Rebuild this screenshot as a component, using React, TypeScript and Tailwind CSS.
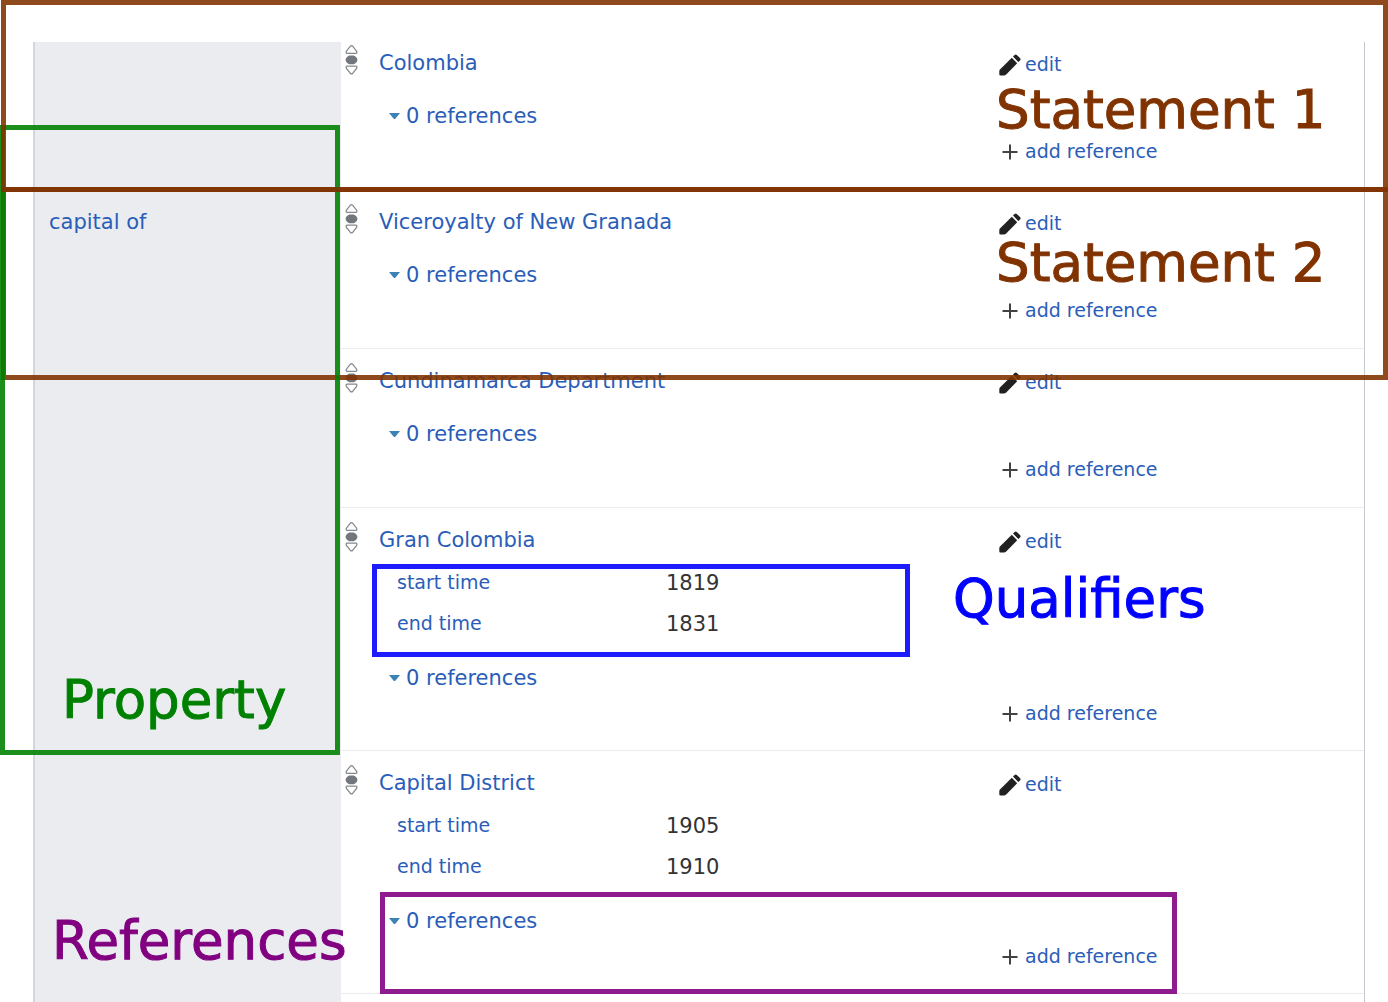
import React from "react";

type Qualifier = { name: string; value: string };
type Statement = { value: string; qualifiers?: Qualifier[] };

const firstGroup: Statement[] = [{ value: "Colombia" }];

const capitalOf: Statement[] = [
  { value: "Viceroyalty of New Granada" },
  { value: "Cundinamarca Department" },
  {
    value: "Gran Colombia",
    qualifiers: [
      { name: "start time", value: "1819" },
      { name: "end time", value: "1831" },
    ],
  },
  {
    value: "Capital District",
    qualifiers: [
      { name: "start time", value: "1905" },
      { name: "end time", value: "1910" },
    ],
  },
];

function RankSelector() {
  return (
    <button type="button" aria-label="Rank" className="block h-8 w-5 pl-1">
      <svg width="13" height="32" viewBox="0 0 13 32" fill="none">
        <path d="M5.2 2.4 Q6.5 1 7.8 2.4 L11.6 7.2 Q12.4 9.4 10.8 9.4 H2.2 Q0.6 9.4 1.4 7.2 Z" fill="#fff" stroke="#85888c" strokeWidth="1.3" />
        <path d="M4.2 11.4 H8.8 Q12.4 13.2 12.4 15.8 Q12.4 18.4 8.8 20.2 H4.2 Q0.6 18.4 0.6 15.8 Q0.6 13.2 4.2 11.4 Z" fill="#72777d" />
        <path d="M5.2 29.2 Q6.5 30.6 7.8 29.2 L11.6 24.4 Q12.4 22.2 10.8 22.2 H2.2 Q0.6 22.2 1.4 24.4 Z" fill="#fff" stroke="#85888c" strokeWidth="1.3" />
      </svg>
    </button>
  );
}

function Pencil() {
  return (
    <svg width="22" height="22" viewBox="0 0 22 22" fill="#202122" className="mt-0.5 shrink-0">
      <path d="M12.8 3.8 L18.2 9.2 L7.2 20.6 Q6.2 21.6 4.8 21.6 H1.4 Q0.3 21.6 0.3 20.5 V17.4 Q0.3 16.2 1.2 15.3 Z" />
      <path d="M14 2.6 L15.6 1 Q16.6 0 17.8 1 L21 4.1 Q22.2 5.4 21 6.6 L19.4 8.1 Z" />
    </svg>
  );
}

function Plus() {
  return (
    <svg width="22" height="22" viewBox="0 0 22 22" fill="none" stroke="#404244" strokeWidth="2" className="shrink-0">
      <path d="M3.5 12 H18.5 M11 4.5 V19.5" />
    </svg>
  );
}

function StatementRow({ statement, first = false }: { statement: Statement; first?: boolean }) {
  const { value, qualifiers } = statement;
  return (
    <article
      className={`flex border-b border-[#eaecf0] ${qualifiers ? "pb-5" : "pb-[21px]"} ${first ? "pt-1.5" : "pt-[17px]"}`}
    >
      <div className="-mt-1 w-[38px] shrink-0">
        <RankSelector />
      </div>
      <div className="min-w-0 flex-1">
        <div className="flex h-8 items-center justify-between">
          <a href="#value" className="text-[21px]">{value}</a>
          <div className="w-[365px] shrink-0">
            <button type="button" className="flex items-center gap-1 text-[19px] leading-6">
              <Pencil />
              edit
            </button>
          </div>
        </div>
        {qualifiers && (
          <dl className="pt-[5px]">
            {qualifiers.map((q) => (
              <div key={q.name} className="flex h-[41px] items-center pl-[18px]">
                <dt className="w-[269px] text-[19px]">
                  <a href="#qualifier">{q.name}</a>
                </dt>
                <dd className="pt-0.5 text-[21px] text-[#333333]">{q.value}</dd>
              </div>
            ))}
          </dl>
        )}
        <div className={qualifiers ? "pt-[18px]" : "pt-5"}>
          <button type="button" className="flex h-[34px] items-center gap-1.5 pl-[10px] text-[21px]">
            <svg width="11" height="7" viewBox="0 0 11 7" fill="#3b83b5" className="-mt-0.5">
              <path d="M0 0 H11 L6.3 5.7 Q5.5 6.5 4.7 5.7 Z" />
            </svg>
            0 references
          </button>
          <div className="flex justify-end">
            <div className="w-[365px]">
              <button type="button" className="flex h-[34px] items-center gap-1 text-[19px]">
                <Plus />
                add reference
              </button>
            </div>
          </div>
        </div>
      </div>
    </article>
  );
}

function StatementGroup({
  property,
  statements,
  first = false,
}: {
  property?: string;
  statements: Statement[];
  first?: boolean;
}) {
  return (
    <section className={`flex ${first ? "" : "flex-1"}`}>
      <div className="w-[308px] shrink-0 border-l-2 border-[#d3d6dc] bg-[#eaecf0] pt-4 pl-3.5">
        {property && (
          <a href="#property" className="block text-[21px] leading-8">{property}</a>
        )}
      </div>
      <div className="min-w-0 flex-1 border-r border-[#c3c9cf]">
        {statements.map((s) => (
          <StatementRow key={s.value} statement={s} first={first} />
        ))}
      </div>
    </section>
  );
}

function Frame({ className }: { className: string }) {
  return <div aria-hidden="true" className={`pointer-events-none absolute border-[5px] opacity-[0.89] ${className}`} />;
}

function Label({ className, children }: { className: string; children: React.ReactNode }) {
  return (
    <div className={`pointer-events-none absolute text-[53px] leading-[60px] whitespace-nowrap [-webkit-text-stroke:1px_currentColor] ${className}`}>
      {children}
    </div>
  );
}

export default function App() {
  return (
    <div className="relative flex min-h-screen flex-col overflow-hidden bg-white pt-[42px] pr-[23px] pl-[33px] font-['DejaVu_Sans',sans-serif] text-[#2a5db8]">
      <main className="flex flex-1 flex-col">
        <StatementGroup statements={firstGroup} first />
        <StatementGroup property="capital of" statements={capitalOf} />
      </main>

      <Frame className="top-[187px] right-0 left-px h-[193px] border-[#803300]" />
      <Frame className="top-[125px] left-0 h-[630px] w-[340px] border-[#008000]" />
      <Frame className="top-0 right-0 left-px h-[192px] border-[#803300]" />
      <Frame className="top-[564px] left-[372px] h-[93px] w-[538px] border-[#0000ff]" />
      <Frame className="top-[892px] left-[380px] h-[102px] w-[797px] border-[#800080]" />

      <Label className="top-[80px] left-[996px] text-[#803300]">Statement 1</Label>
      <Label className="top-[233px] left-[996px] text-[#803300]">Statement 2</Label>
      <Label className="top-[569px] left-[953px] text-[#0000ff]">Qualifiers</Label>
      <Label className="top-[670px] left-[62px] text-[#008000]">Property</Label>
      <Label className="top-[911px] left-[52px] text-[#800080]">References</Label>
    </div>
  );
}
